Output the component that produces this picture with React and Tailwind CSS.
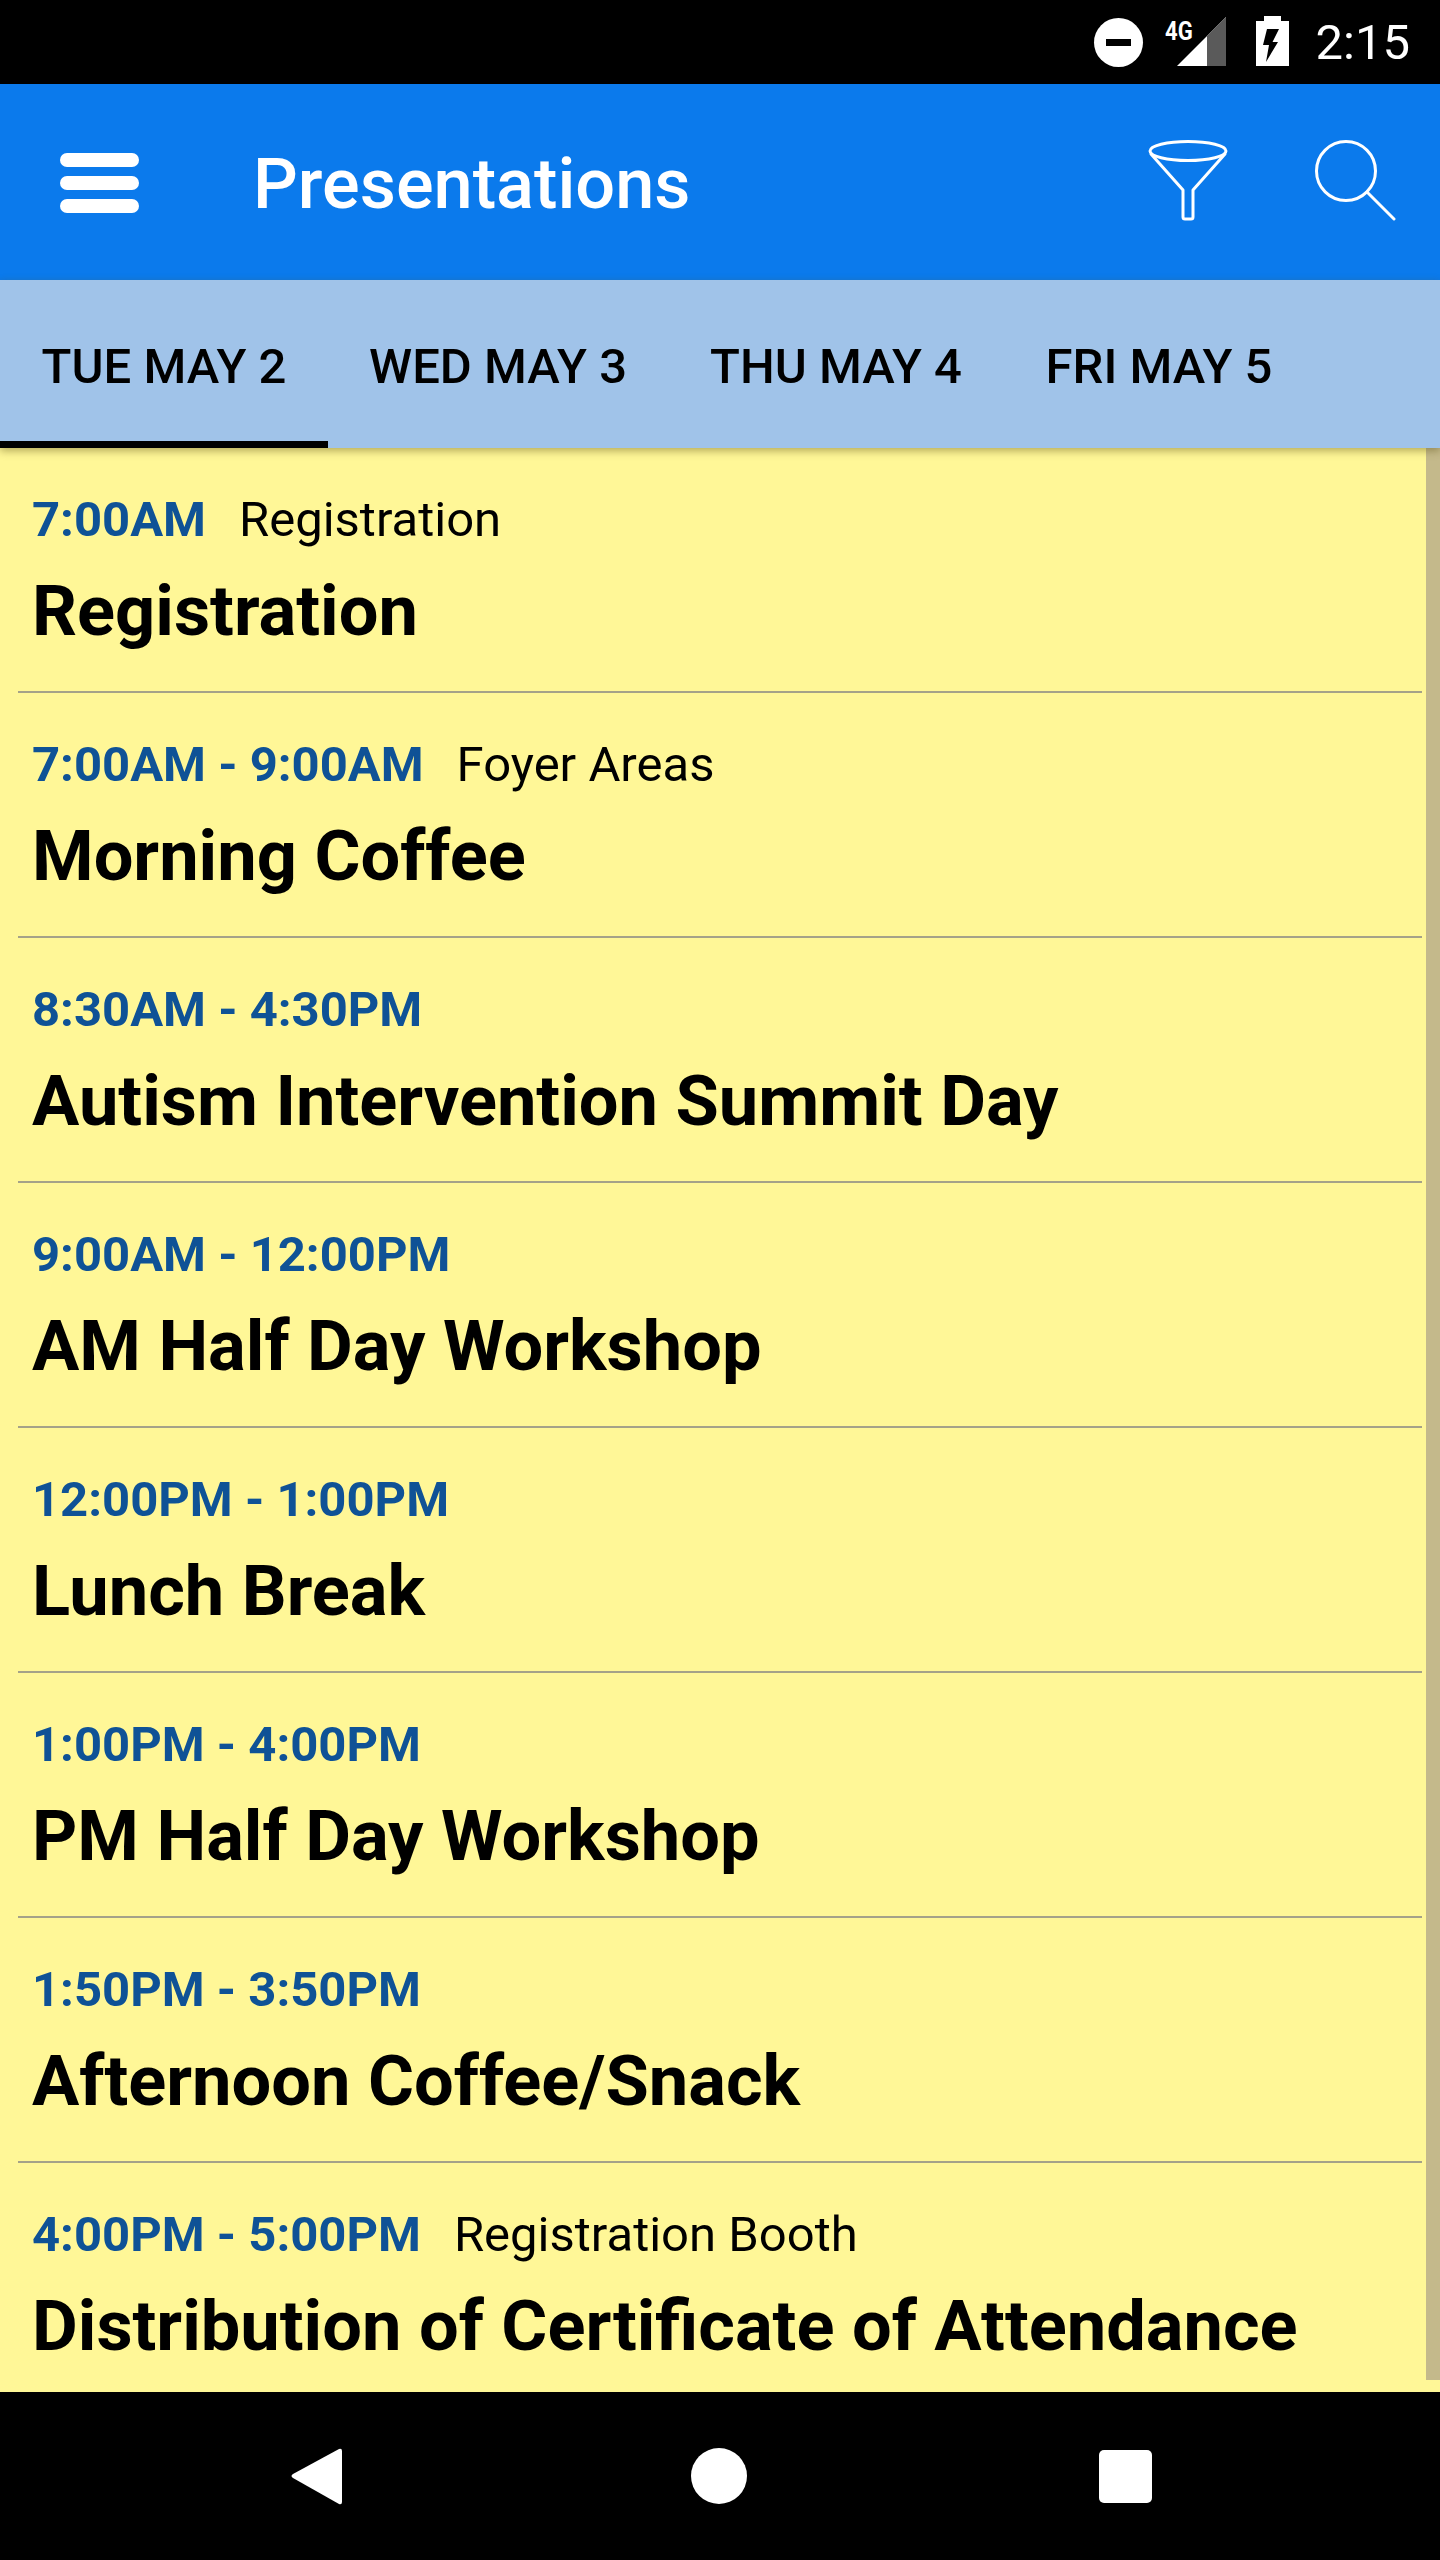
import { Fragment } from "react";

const tabs = [
  { label: "TUE MAY 2", width: "w-[328px]", active: true },
  { label: "WED MAY 3", width: "w-[340px]" },
  { label: "THU MAY 4", width: "w-[336px]" },
  { label: "FRI MAY 5", width: "w-[310px]" },
];

const sessions = [
  { time: "7:00AM", place: "Registration", title: "Registration" },
  { time: "7:00AM - 9:00AM", place: "Foyer Areas", title: "Morning Coffee" },
  { time: "8:30AM - 4:30PM", title: "Autism Intervention Summit Day" },
  { time: "9:00AM - 12:00PM", title: "AM Half Day Workshop" },
  { time: "12:00PM - 1:00PM", title: "Lunch Break" },
  { time: "1:00PM - 4:00PM", title: "PM Half Day Workshop" },
  { time: "1:50PM - 3:50PM", title: "Afternoon Coffee/Snack" },
  { time: "4:00PM - 5:00PM", place: "Registration Booth", title: "Distribution of Certificate of Attendance" },
];

const StatusBar = () => (
  <div className="h-[84px] bg-black flex items-center justify-end pr-[30px] text-white">
    <div className="w-[49px] h-[49px] rounded-full bg-white flex items-center justify-center">
      <div className="w-[25px] h-[7px] bg-black" />
    </div>
    <div className="ml-[22px] w-[61px] h-[50px] relative">
      <svg width="61" height="50" viewBox="0 0 61 50" className="absolute left-0 top-0">
        <polygon points="12,49 61,0 61,49" fill="#fff" />
        <polygon points="42,19 61,0 61,49 42,49" fill="#5a5a5a" />
      </svg>
      <span className="absolute left-0 top-[1px] text-[26px] leading-[26px] font-bold scale-x-[0.85] origin-left">4G</span>
    </div>
    <svg width="33" height="50" viewBox="0 0 33 50" className="ml-[30px] mb-[2px]">
      <path d="M8 5V0h17v5h8v45H0V5z" fill="#fff" />
      <path d="M11 13h12l-6.5 13H22L10 46l3-17H7z" fill="#000" />
    </svg>
    <span className="ml-[27px] text-[49px] leading-none">2:15</span>
  </div>
);

const AppBar = () => (
  <div className="h-[196px] bg-[#0b7aec] flex items-center text-white">
    <div className="ml-[60px] w-[79px] flex flex-col gap-[9px] mt-[1px]">
      <div className="h-[14px] rounded-full bg-white" />
      <div className="h-[14px] rounded-full bg-white" />
      <div className="h-[14px] rounded-full bg-white" />
    </div>
    <h1 className="ml-[114px] text-[70.3px] leading-none font-medium mt-[5px]">Presentations</h1>
    <div className="ml-auto flex items-center mr-[44px] gap-[87px] mt-[-4px]">
      <svg width="80" height="81" viewBox="0 0 80 81" fill="none" stroke="#fff" strokeWidth="3" strokeLinejoin="round" strokeLinecap="round">
        <ellipse cx="40" cy="11" rx="38" ry="9.5" />
        <path d="M3 14 35 50v27q0 2 2 2h6q2 0 2-2V50l32-36" />
      </svg>
      <svg width="81" height="81" viewBox="0 0 81 81" fill="none" stroke="#fff" strokeWidth="3" strokeLinecap="round">
        <circle cx="31" cy="31" r="29.5" />
        <path d="M52 52 79 79" />
      </svg>
    </div>
  </div>
);

const Tabs = () => (
  <div className="h-[168px] bg-[#a0c3e9] flex relative z-10 shadow-[0_3px_8px_rgba(90,80,20,0.45)]">
    {tabs.map((t) => (
      <div key={t.label} className={`${t.width} h-full flex items-center justify-center relative pt-[4px]`}>
        <span className="text-[49px] leading-none font-medium text-black">{t.label}</span>
        {t.active && <div className="absolute left-0 right-0 bottom-0 h-[7px] bg-black" />}
      </div>
    ))}
  </div>
);

const SessionRow = ({ time, place, title }) => (
  <div className="h-[243px] pl-[32px] flex flex-col">
    <div className="flex items-center pt-[45px]">
      <span className="text-[49px] leading-[54px] font-bold text-[#0f5296]">{time}</span>
      {place && <span className="ml-[33px] text-[49px] leading-[54px] text-black">{place}</span>}
    </div>
    <div className="text-[70.4px] leading-[80px] font-bold text-black mt-[24px]">{title}</div>
  </div>
);

export default function App() {
  return (
    <div className="w-[1440px] h-[2560px] flex flex-col overflow-hidden font-['Roboto',sans-serif]">
      <StatusBar />
      <AppBar />
      <Tabs />
      <div className="h-[1944px] bg-[#fff797] relative overflow-hidden">
        {sessions.map((s, i) => (
          <Fragment key={s.title}>
            <SessionRow {...s} />
            {i < sessions.length - 1 && <div className="mx-[18px] h-[2px] bg-[#a5a288]" />}
          </Fragment>
        ))}
        <div className="absolute right-0 top-0 bottom-[12px] w-[14px] bg-[#c4b98b]" />
      </div>
      <div className="h-[168px] bg-black flex items-center">
        <svg width="52" height="58" viewBox="0 0 52 58" className="ml-[290px]">
          <path d="M49 2 3 27q-3 2 0 4l46 26q3 1 3-2V4q0-3-3-2z" fill="#fff" />
        </svg>
        <div className="ml-[349px] w-[56px] h-[56px] rounded-full bg-white" />
        <div className="ml-[352px] w-[53px] h-[53px] rounded-[5px] bg-white" />
      </div>
    </div>
  );
}
